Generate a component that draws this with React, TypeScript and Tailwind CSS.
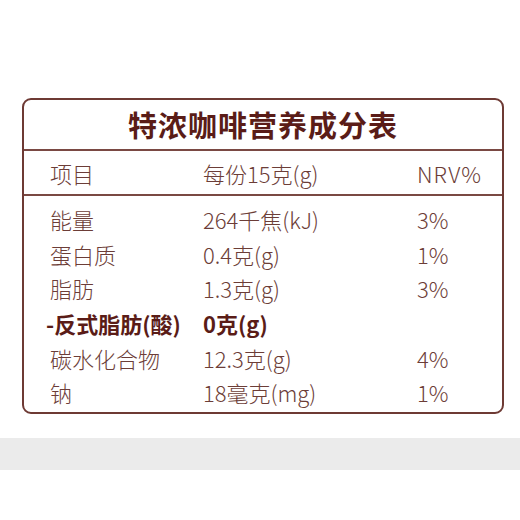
const rows: { name: string; amount: string; nrv: string; bold?: boolean }[] = [
  { name: "能量", amount: "264千焦(kJ)", nrv: "3%" },
  { name: "蛋白质", amount: "0.4克(g)", nrv: "1%" },
  { name: "脂肪", amount: "1.3克(g)", nrv: "3%" },
  { name: "-反式脂肪(酸)", amount: "0克(g)", nrv: "", bold: true },
  { name: "碳水化合物", amount: "12.3克(g)", nrv: "4%" },
  { name: "钠", amount: "18毫克(mg)", nrv: "1%" },
];

export default function App() {
  return (
    <div
      className="h-[520px] w-[520px] bg-white pt-[98px]"
      style={{ fontFamily: '"Noto Sans CJK SC", "Noto Sans", sans-serif' }}
    >
      <div className="ml-[22px] w-[482px] rounded-[9px] border-2 border-[#6e3a34] text-[#6c3d37]">
        {/* 标题 */}
        <div className="flex h-[51px] items-center justify-center border-b-2 border-[#7a4943]">
          <h1 className="text-[29px] font-bold leading-none tracking-[1px] text-[#5a1c17]">
            特浓咖啡营养成分表
          </h1>
        </div>

        {/* 表头 */}
        <div className="flex h-[45px] items-center border-b-2 border-[#7a4943] pl-[26px] text-[22px] font-light leading-none">
          <span className="w-[153px]">项目</span>
          <span className="w-[214px]">每份15克(g)</span>
          <span className="tracking-[1px]">NRV%</span>
        </div>

        {/* 数据 */}
        <div className="pb-[2px] pt-[6px]">
          {rows.map((r) => (
            <div
              key={r.name}
              className={
                "flex h-[34.6px] items-center pl-[26px] text-[22px] leading-none " +
                (r.bold ? "font-bold text-[#5a1c17]" : "font-light")
              }
            >
              <span className={r.bold ? "w-[153px] -ml-[4px]" : "w-[153px]"}>{r.name}</span>
              <span className={r.bold ? "w-[214px] ml-[4px]" : "w-[214px]"}>{r.amount}</span>
              <span>{r.nrv}</span>
            </div>
          ))}
        </div>
      </div>

      <div className="mt-[24px] h-[32px] w-full bg-[#ebebeb]" />
    </div>
  );
}
